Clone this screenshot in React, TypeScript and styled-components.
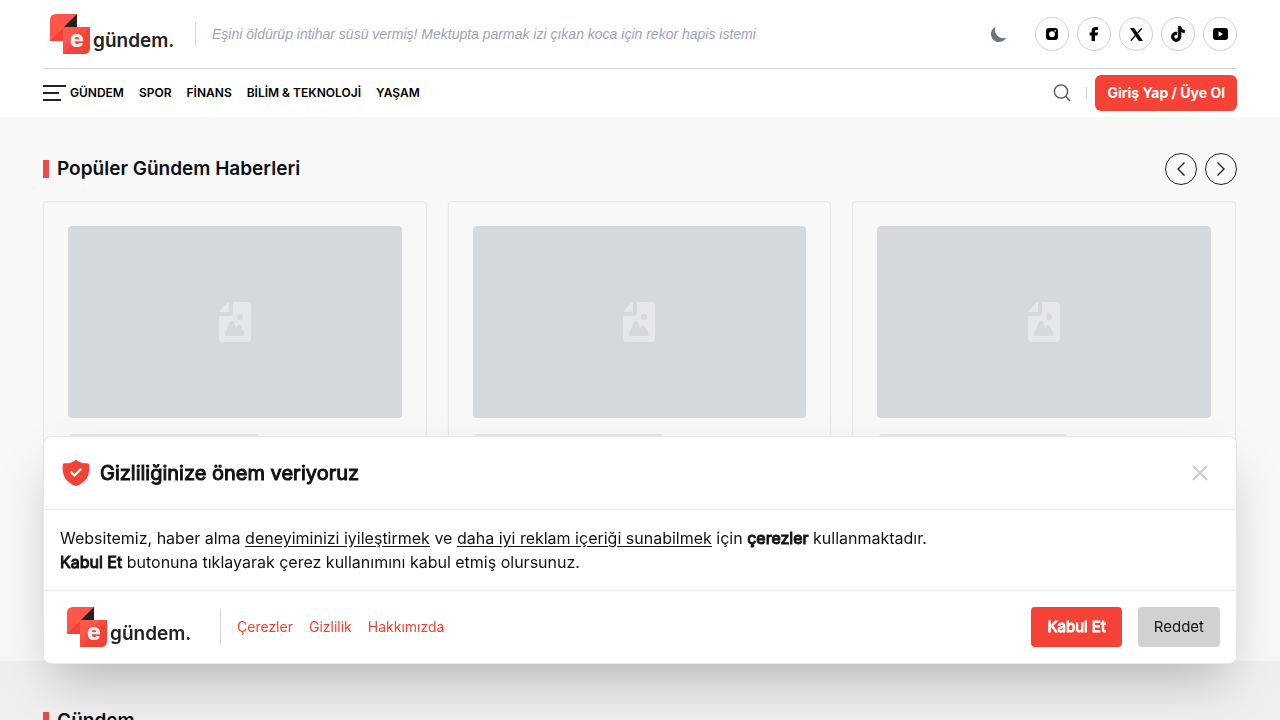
import React from "react";
import styled, { createGlobalStyle } from "styled-components";
import { BiLogoTiktok } from "react-icons/bi";

const GlobalStyle = createGlobalStyle`
  *, *::before, *::after { box-sizing: border-box; }
  body {
    margin: 0;
    background: #efefef;
    color: #0f1216;
    font-family: Inter, "Liberation Sans", sans-serif;
    font-size: 16px;
    line-height: 24px;
  }
  button { font: inherit; color: inherit; border: 0; background: none; padding: 0; cursor: pointer; }
  a { color: inherit; text-decoration: none; }
  h2, p { margin: 0; }
  svg { display: block; }
`;

const Header = styled.header`
  background: #fff;
  padding: 0 43px;
`;

const TopBar = styled.div`
  display: flex;
  align-items: center;
  height: 69px;
  border-bottom: 1px solid #d1d5db;
`;

const LogoLink = styled.a`
  display: flex;
  flex: none;
  width: 136px;
  padding-left: 7px;
`;

const Divider = styled.span<{ $height: number; $gap: string }>`
  flex: none;
  width: 1px;
  height: ${(p) => p.$height}px;
  margin: ${(p) => p.$gap};
  background: #d1d5db;
`;

const Headline = styled.a`
  flex: 1;
  min-width: 0;
  overflow: hidden;
  white-space: nowrap;
  text-overflow: ellipsis;
  font: italic 14px/20px "Liberation Sans", Arial, sans-serif;
  color: #9ca3af;
`;

const ThemeButton = styled.button`
  display: flex;
  margin-right: 26px;
  color: #6b7280;
`;

const SocialList = styled.div`
  display: flex;
  gap: 8px;
`;

const SocialLink = styled.a`
  display: grid;
  place-items: center;
  width: 34px;
  height: 34px;
  border: 1px solid #d1d1d1;
  border-radius: 50%;
  color: #000;
`;

const NavBar = styled.nav`
  display: flex;
  align-items: center;
  height: 48px;
`;

const MenuButton = styled.button`
  margin-right: 4px;
`;

const NavLinks = styled.div`
  display: flex;
  flex: 1;
  gap: 15px;
  font-size: 12px;
  line-height: 16px;
  font-weight: 600;
  color: #000;
`;

const LoginButton = styled.button`
  height: 36px;
  padding: 0 12px;
  border-radius: 6px;
  background: #f44336;
  color: #fff;
  font-size: 14px;
  font-weight: 700;
`;

const Section = styled.section<{ $tone: string; $top: number }>`
  padding: ${(p) => p.$top}px 43px 46px;
  background: ${(p) => p.$tone};
`;

const SectionHead = styled.div`
  display: flex;
  align-items: center;
  height: 32px;
  margin-bottom: 16px;
`;

const SectionTitle = styled.h2`
  display: flex;
  align-items: center;
  flex: 1;
  gap: 8px;
  font-size: 19px;
  line-height: 28px;
  font-weight: 600;
  color: #0a0e12;
  &::before {
    content: "";
    width: 6px;
    height: 18px;
    background: #e94b4b;
  }
`;

const ArrowButtons = styled.div`
  display: flex;
  gap: 8px;
`;

const ArrowButton = styled.button`
  display: grid;
  place-items: center;
  width: 32px;
  height: 32px;
  border: 1px solid #222;
  border-radius: 50%;
`;

const CardGrid = styled.div`
  display: grid;
  grid-template-columns: repeat(3, 1fr);
  gap: 21px;
  padding-right: 1px;
`;

const Card = styled.article`
  padding: 24px;
  border: 1px solid #e8e8ea;
  border-radius: 4px;
  box-shadow: 0 1px 2px rgba(0, 0, 0, 0.06);
`;

const CardImage = styled.div`
  display: grid;
  place-items: center;
  height: 192px;
  margin-bottom: 16px;
  border-radius: 4px;
  background: #d5d9de;
  color: #e5e7eb;
`;

const SkeletonLine = styled.div<{ $width: string }>`
  width: ${(p) => p.$width};
  height: 10px;
  margin-bottom: 16px;
  border-radius: 5px;
  background: #e5e7eb;
`;

const Consent = styled.div`
  position: fixed;
  left: 43px;
  right: 43px;
  bottom: 56px;
  border: 1px solid #e5e7eb;
  border-radius: 8px;
  background: #fff;
  box-shadow: 0 25px 50px -12px rgba(0, 0, 0, 0.25);
`;

const ConsentHead = styled.div`
  display: flex;
  align-items: center;
  height: 73px;
  padding: 0 24px 0 16px;
  border-bottom: 1px solid #e5e7eb;
`;

const ConsentTitle = styled.h2`
  flex: 1;
  margin-left: 8px;
  font-size: 20px;
  line-height: 28px;
  font-weight: 400;
  -webkit-text-stroke: 1px currentColor;
`;

const CloseButton = styled.button`
  color: #c9ccd2;
`;

const ConsentText = styled.p`
  padding: 16px;
  border-bottom: 1px solid #e5e7eb;
  u { text-underline-offset: 2px; }
  b { font-weight: 400; -webkit-text-stroke: 1px currentColor; }
`;

const ConsentFoot = styled.div`
  display: flex;
  align-items: center;
  padding: 16px;
`;

const FootLinks = styled.div`
  display: flex;
  flex: 1;
  gap: 16px;
  font-size: 14px;
  line-height: 20px;
  color: #f44336;
`;

const ChoiceButton = styled.button<{ $primary?: boolean }>`
  height: 40px;
  padding: 0 16px;
  margin-left: 16px;
  border-radius: 4px;
  background: ${(p) => (p.$primary ? "#f44336" : "#d1d1d1")};
  color: ${(p) => (p.$primary ? "#fff" : "#0f1216")};
  font-size: 15px;
  -webkit-text-stroke: ${(p) => (p.$primary ? "1px currentColor" : "0")};
`;

const Logo = () => (
  <svg width="128" height="40" viewBox="0 0 128 40" role="img" aria-label="e gündem">
    <path d="M6 0H27V27H0V6Q0 0 6 0Z" fill="#ff564a" />
    <path d="M0 27L13 14V27Z" fill="#f44336" />
    <path d="M27 0V13H14Z" fill="#222" />
    <path d="M13 13H40V34Q40 40 34 40H13Z" fill="#f44336" />
    <path d="M40 13L13 40V13Z" fill="#ff564a" />
    <path d="M33 13H40L13 40V33Z" fill="#f44336" opacity="0.5" />
    <text x="20" y="33" fontFamily="Inter, sans-serif" fontWeight="800" fontSize="23" fill="#f3f0f0">e</text>
    <text x="43" y="33" fontFamily="Inter, sans-serif" fontWeight="600" fontSize="19" fill="#222">gündem.</text>
  </svg>
);

const PlaceholderIcon = () => (
  <svg width="32" height="40" viewBox="0 0 16 20" fill="currentColor" aria-hidden="true">
    <path d="M14.066 0H7v5a2 2 0 0 1-2 2H0v11a1.97 1.97 0 0 0 1.934 2h12.132A1.97 1.97 0 0 0 16 18V2a1.97 1.97 0 0 0-1.934-2ZM10.5 6a1.5 1.5 0 1 1 0 2.999A1.5 1.5 0 0 1 10.5 6Zm2.221 10.515a1 1 0 0 1-.858.485h-8a1 1 0 0 1-.9-1.43L5.6 10.039a.978.978 0 0 1 .936-.57 1 1 0 0 1 .9.632l1.181 2.981.541-1a.945.945 0 0 1 .883-.522 1 1 0 0 1 .879.529l1.832 3.438a1 1 0 0 1-.031.988Z" />
    <path d="M5 5V.13a2.96 2.96 0 0 0-1.293.749L.879 3.707A2.98 2.98 0 0 0 .13 5H5Z" />
  </svg>
);

const InstagramIcon = () => (
  <svg width="12" height="12" viewBox="0 0 12 12">
    <rect width="12" height="12" rx="3" />
    <circle cx="6" cy="6.200" r="2.900" fill="#fff" />
    <circle cx="9.200" cy="2.900" r="0.800" fill="#fff" />
  </svg>
);

const FacebookIcon = () => (
  <svg width="10" height="14" viewBox="0 0 10 14">
    <path d="M2.600 14V8.600H0.600V5.400H2.600V4C2.600 1.300 4 0 6.600 0H9V3H7.300C6.300 3 6 3.400 6 4.200V5.400H9L8.500 8.600H6V14Z" />
  </svg>
);

const XIcon = () => (
  <svg width="13" height="13" viewBox="0 0 13 13">
    <path d="M0 0H4.200L13 13H8.800Z" />
    <path d="M11.800 0.300L7.200 5.500M5.600 7.300L0.800 12.700" stroke="#000" strokeWidth="1.300" />
  </svg>
);

const YoutubeIcon = () => (
  <svg width="15" height="12" viewBox="0 0 15 12">
    <rect width="15" height="12" rx="3" />
    <path d="M5.500 3.200L10 6L5.500 8.800Z" fill="#fff" />
  </svg>
);

const socials = [
  { name: "Instagram", icon: <InstagramIcon /> },
  { name: "Facebook", icon: <FacebookIcon /> },
  { name: "X", icon: <XIcon /> },
  { name: "TikTok", icon: <BiLogoTiktok size={18} stroke="#000" strokeWidth={1} /> },
  { name: "YouTube", icon: <YoutubeIcon /> },
];

const categories = ["GÜNDEM", "SPOR", "FİNANS", "BİLİM & TEKNOLOJİ", "YAŞAM"];

export default function App() {
  return (
    <>
      <GlobalStyle />
      <Header>
        <TopBar>
          <LogoLink href="#"><Logo /></LogoLink>
          <Divider $height={24} $gap="0 16px" />
          <Headline href="#">Eşini öldürüp intihar süsü vermiş! Mektupta parmak izi çıkan koca için rekor hapis istemi</Headline>
          <ThemeButton aria-label="Karanlık mod">
            <svg width="20" height="20" viewBox="0 0 20 20" fill="currentColor">
              <path d="M17.293 13.293A8 8 0 016.707 2.707a8.001 8.001 0 1010.586 10.586z" />
            </svg>
          </ThemeButton>
          <SocialList>
            {socials.map(({ name, icon }) => (
              <SocialLink href="#" key={name} aria-label={name}>{icon}</SocialLink>
            ))}
          </SocialList>
        </TopBar>
        <NavBar>
          <MenuButton aria-label="Menü">
            <svg width="23" height="16" viewBox="0 0 23 16" stroke="#222" strokeWidth="2">
              <path d="M0 1H23M0 8H16M0 15H18" />
            </svg>
          </MenuButton>
          <NavLinks>
            {categories.map((c) => <a href="#" key={c}>{c}</a>)}
          </NavLinks>
          <button aria-label="Ara">
            <svg width="18" height="18" viewBox="0 0 18 18" fill="none" stroke="#4b4f57" strokeWidth="1.3">
              <circle cx="8" cy="7.5" r="6.6" />
              <path d="M12.7 12.2L17 17" />
            </svg>
          </button>
          <Divider $height={12} $gap="0 8px 0 15px" />
          <LoginButton>Giriş Yap / Üye Ol</LoginButton>
        </NavBar>
      </Header>
      <main>
        <Section $tone="#f8f8f8" $top={36}>
          <SectionHead>
            <SectionTitle>Popüler Gündem Haberleri</SectionTitle>
            <ArrowButtons>
              <ArrowButton aria-label="Önceki">
                <svg width="16" height="16" viewBox="0 0 16 16" fill="none" stroke="#222" strokeWidth="1.4"><path d="M11.500 1.500L5 8L11.500 14.500" /></svg>
              </ArrowButton>
              <ArrowButton aria-label="Sonraki">
                <svg width="16" height="16" viewBox="0 0 16 16" fill="none" stroke="#222" strokeWidth="1.4"><path d="M4.500 1.500L11 8L4.500 14.500" /></svg>
              </ArrowButton>
            </ArrowButtons>
          </SectionHead>
          <CardGrid>
            {[0, 1, 2].map((n) => (
              <Card key={n}>
                <CardImage><PlaceholderIcon /></CardImage>
                <SkeletonLine $width="192px" />
                <SkeletonLine $width="100%" />
                <SkeletonLine $width="100%" />
                <SkeletonLine $width="100%" />
                <SkeletonLine $width="80%" />
                <SkeletonLine $width="128px" />
              </Card>
            ))}
          </CardGrid>
        </Section>
        <Section $tone="#efefef" $top={44}>
          <SectionHead><SectionTitle>Gündem</SectionTitle></SectionHead>
        </Section>
      </main>
      <Consent role="dialog" aria-labelledby="consent-title">
        <ConsentHead>
          <svg width="32" height="32" viewBox="0 0 32 32" aria-hidden="true">
            <path d="M16 2.500C19.500 6 23 6.500 27.500 6.300Q29 6.300 29.200 8C30.500 18 26 26 16 29C6 26 1.500 18 2.800 8Q3 6.300 4.500 6.300C9 6.500 12.500 6 16 2.500Z" fill="#f44336" />
            <path d="M11.500 15.500L14.500 18.500L20.500 12.500" fill="none" stroke="#fff" strokeWidth="2.400" strokeLinecap="round" strokeLinejoin="round" />
          </svg>
          <ConsentTitle id="consent-title">Gizliliğinize önem veriyoruz</ConsentTitle>
          <CloseButton aria-label="Kapat">
            <svg width="24" height="24" viewBox="0 0 24 24" stroke="currentColor" strokeWidth="2"><path d="M5 5L19 19M19 5L5 19" /></svg>
          </CloseButton>
        </ConsentHead>
        <ConsentText>
          Websitemiz, haber alma <u>deneyiminizi iyileştirmek</u> ve <u>daha iyi reklam içeriği sunabilmek</u> için <b>çerezler</b> kullanmaktadır.
          <br />
          <b>Kabul Et</b> butonuna tıklayarak çerez kullanımını kabul etmiş olursunuz.
        </ConsentText>
        <ConsentFoot>
          <LogoLink href="#"><Logo /></LogoLink>
          <Divider $height={36} $gap="0 16px 0 24px" />
          <FootLinks>
            <a href="#">Çerezler</a>
            <a href="#">Gizlilik</a>
            <a href="#">Hakkımızda</a>
          </FootLinks>
          <ChoiceButton $primary>Kabul Et</ChoiceButton>
          <ChoiceButton>Reddet</ChoiceButton>
        </ConsentFoot>
      </Consent>
    </>
  );
}
